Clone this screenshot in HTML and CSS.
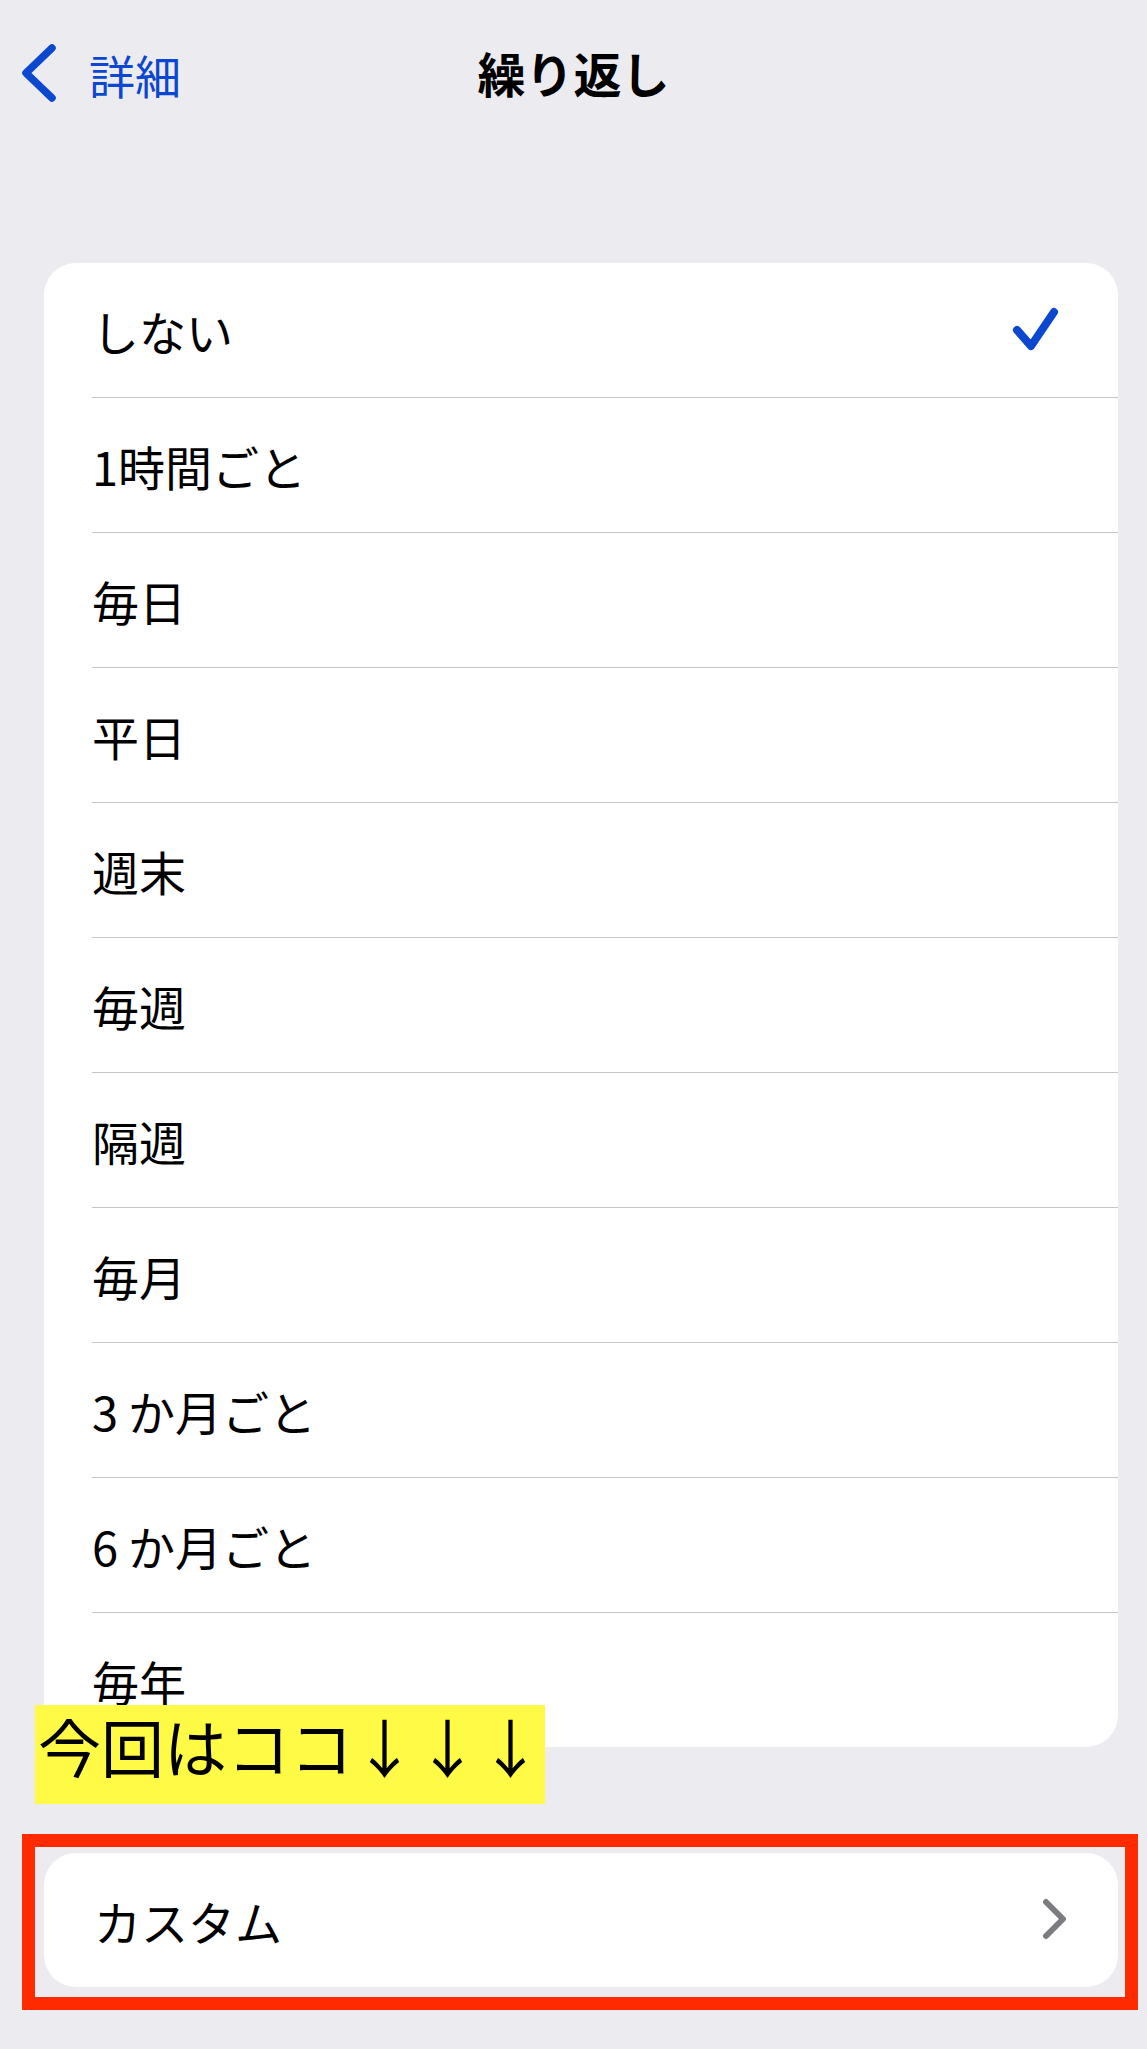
FILE: index.html
```html
<!DOCTYPE html>
<html lang="ja">
<head>
  <meta charset="UTF-8" />
  <meta name="viewport" content="width=device-width, initial-scale=1.0" />
  <title>繰り返し</title>
  <link rel="stylesheet" href="styles.css">
</head>
<body>
  <nav class="navbar">
    <a class="back" href="#">
      <svg class="back-icon" width="36" height="60" viewBox="0 0 36 60">
        <polyline points="30,4 4,29 30,54" />
      </svg>
      <span>詳細</span>
    </a>
    <h1 class="title">繰り返し</h1>
    <div></div>
  </nav>

  <section class="list-section">
    <ul class="list">
      <li class="row">
        <span>しない</span>
        <svg class="check" width="48" height="46" viewBox="0 0 48 46">
          <polyline points="5,23 19,39 42,5" />
        </svg>
      </li>
      <li class="row"><span>1時間ごと</span></li>
      <li class="row"><span>毎日</span></li>
      <li class="row"><span>平日</span></li>
      <li class="row"><span>週末</span></li>
      <li class="row"><span>毎週</span></li>
      <li class="row"><span>隔週</span></li>
      <li class="row"><span>毎月</span></li>
      <li class="row"><span><span class="num">3</span>か月ごと</span></li>
      <li class="row"><span><span class="num">6</span>か月ごと</span></li>
      <li class="row"><span>毎年</span></li>
    </ul>
    <div class="callout">今回はココ↓↓↓</div>
  </section>

  <div class="highlight">
    <a class="custom" href="#">
      <span>カスタム</span>
      <svg class="chevron" width="26" height="44" viewBox="0 0 26 44">
        <polyline points="4,4 21,21 4,38" />
      </svg>
    </a>
  </div>
</body>
</html>
```

FILE: styles.css
```css
:root {
  --bg: #ebebf0;
  --white: #ffffff;
  --text: #000000;
  --blue: #0c47cf;
  --line: #c5c5c9;
  --gray: #7c7c80;
  --marker: #fffa45;
  --red: #ff2a00;
}
*, *::before, *::after { box-sizing: border-box; }
body {
  margin: 0;
  font-family: "Noto Sans CJK JP", "Noto Sans", sans-serif;
  background: var(--bg);
  color: var(--text);
  min-height: 2049px;
}

/* top bar */
.navbar {
  height: 148px;
  display: grid;
  grid-template-columns: 1fr auto 1fr;
  align-items: center;
}
.back {
  display: flex; align-items: center;
  padding-left: 22px;
  color: var(--blue);
  text-decoration: none;
  font-size: 46px; line-height: 1;
}
.back-icon { margin-right: 31px; }
.back-icon polyline {
  fill: none; stroke: var(--blue);
  stroke-width: 7.5; stroke-linecap: round; stroke-linejoin: round;
}
.title {
  margin: 0 0 4px;
  font-size: 48px; font-weight: 700; line-height: 1;
}

/* option list */
.list-section {
  position: relative;
  margin: 115px 29px 0 44px;
}
.list {
  list-style: none; margin: 0; padding: 0;
  background: var(--white);
  border-radius: 32px;
  overflow: hidden;
}
.row {
  margin-left: 48px;
  height: 135px;
  padding-right: 58px;
  display: flex; align-items: center; justify-content: space-between;
  border-bottom: 1px solid var(--line);
  font-size: 47px; line-height: 1;
}
.row:last-child { height: 134px; border-bottom: none; }
.row .num { margin-right: 10px; }
.check polyline {
  fill: none; stroke: var(--blue);
  stroke-width: 8; stroke-linecap: round; stroke-linejoin: round;
}

/* annotation on the screenshot */
.callout {
  position: absolute;
  left: -9px; bottom: -57px;
  height: 99px;
  padding: 8px 3px 0 3px;
  background: var(--marker);
  font-size: 63px; line-height: 1;
  white-space: nowrap;
}

.highlight {
  margin: 87px 9px 0 22px;
  border: 13px solid var(--red);
  padding: 6px 7px 10px 9px;
}
.custom {
  height: 134px;
  padding: 0 50px 0 50px;
  display: flex; align-items: center; justify-content: space-between;
  background: var(--white);
  border-radius: 32px;
  color: var(--text);
  text-decoration: none;
  font-size: 47px; line-height: 1;
}
.chevron polyline {
  fill: none; stroke: var(--gray);
  stroke-width: 6; stroke-linecap: round; stroke-linejoin: round;
}
```
